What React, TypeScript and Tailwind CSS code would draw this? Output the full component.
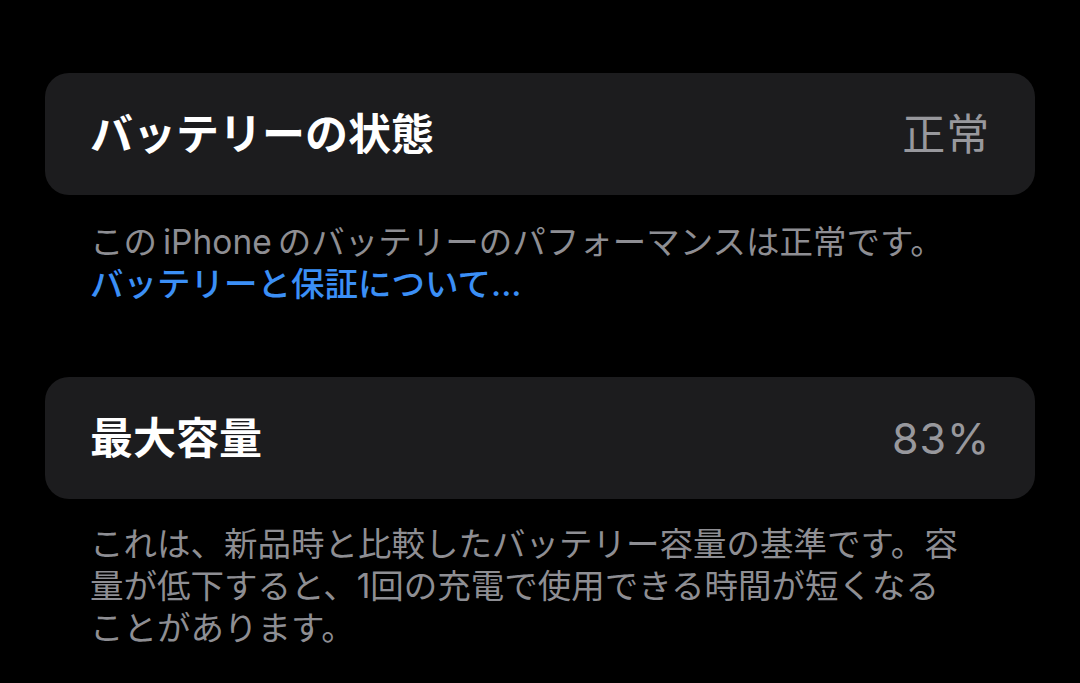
import React from "react";

const jp = '"Inter", "Noto Sans CJK JP", sans-serif';

function Row({ label, value }: { label: string; value: string }) {
    return (
        <div className="flex h-[122px] items-center justify-between rounded-[24px] bg-[#1c1c1e] px-[45px]">
            <span className="text-[43px] font-semibold text-white">{label}</span>
            <span className="text-[43px] font-normal tracking-[0.02em] text-[#98989d]">{value}</span>
        </div>
    );
}

export default function App() {
    return (
        <div className="min-h-[683px] w-[1080px] bg-black px-[45px] pt-[73px]" style={{ fontFamily: jp }}>
            <Row label="バッテリーの状態" value="正常" />
            <p className="mt-[26px] px-[45px] text-[33.5px] leading-[42px] text-[#8e8e93]">
                この<span className="px-[6px]">iPhone</span>のバッテリーのパフォーマンスは正常です。
                <br />
                <span className="font-medium text-[#3b8ff6]">バッテリーと保証について...</span>
            </p>

            <div className="mt-[72px]">
                <Row label="最大容量" value="83%" />
            </div>
            <p className="mt-[24px] px-[45px] text-[33.5px] leading-[42px] text-[#8e8e93]">
                これは、新品時と比較したバッテリー容量の基準です。容
                <br />
                量が低下すると、1回の充電で使用できる時間が短くなる
                <br />
                ことがあります。
            </p>
        </div>
    );
}
